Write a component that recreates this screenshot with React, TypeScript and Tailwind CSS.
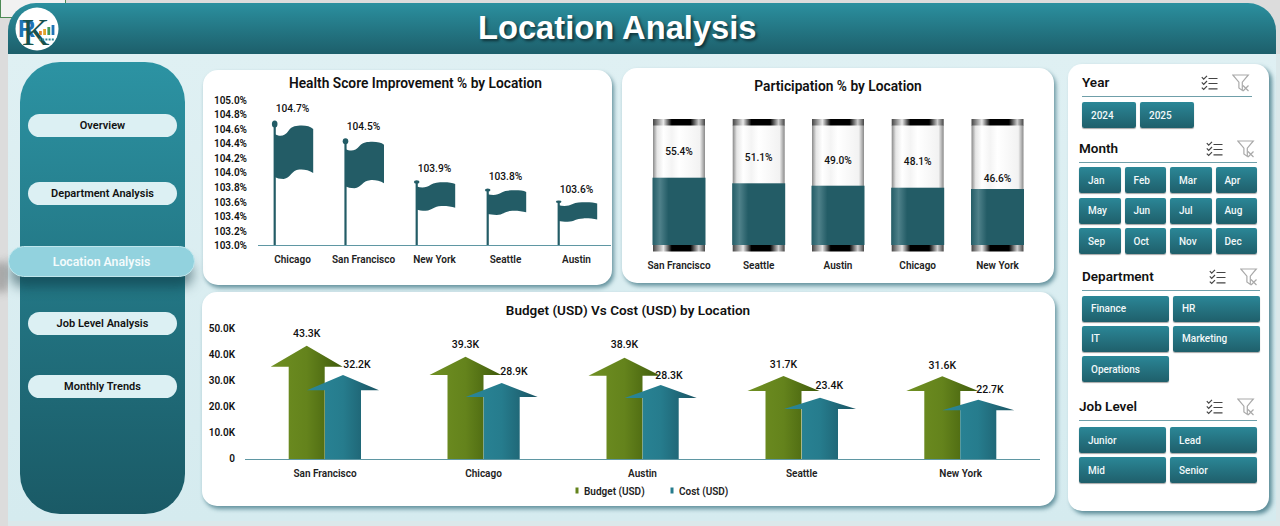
import React from "react";

const DARK = "#235c66";
const AXIS = "#5f97a3";

function ChecklistIcon() {
  return (
    <svg width="17" height="16" viewBox="0 0 17 16" fill="none" stroke="#444" strokeWidth="1.2">
      <path d="M0.8 2.2l1.9 1.9L6 0.8M0.8 7.4l1.9 1.9L6 6M0.8 12.6l1.9 1.9L6 11.2" />
      <path d="M7.5 3.5h9M7.5 8.5h9M7.5 13.8h9" />
    </svg>
  );
}

function FilterIcon() {
  return (
    <svg width="18" height="18" viewBox="0 0 18 18" fill="none" stroke="#a9a9a9" strokeWidth="1.2">
      <path d="M0.8 1h15.5l-6 7.2v8.2l-3.4-2.4V8.2z" />
      <path d="M11 11.5l5.5 5.5M16.5 11.5L11 17" />
    </svg>
  );
}

function NavButton({ label }: { label: string }) {
  return (
    <div className="mx-[8px] flex h-[23px] items-center justify-center rounded-[12px] bg-[#dcf0f3] pt-[1px] text-[11px] font-semibold text-[#111]">
      {label}
    </div>
  );
}

function SlicerButton({ label }: { label: string }) {
  return (
    <div className="flex h-[26px] items-center rounded-[2px] bg-gradient-to-b from-[#2b8797] to-[#1f5f6b] pl-[9px] text-[10px] font-medium text-[#f2f8f9] shadow-[0_1px_1px_rgba(0,0,0,0.35)]">
      {label}
    </div>
  );
}

function SlicerHeader({ title }: { title: string }) {
  return (
    <div className="flex h-[24px] items-center border-b border-[#6f9fa9] pb-[3px]">
      <span className="flex-1 text-[13.5px] leading-none font-semibold text-[#111]">{title}</span>
      <ChecklistIcon />
      <span className="w-[14px]" />
      <FilterIcon />
      <span className="w-[2px]" />
    </div>
  );
}

function flagPath(x: number, c: number, b: number, a: number) {
  const w = 38.5;
  return `M${x} ${c + 0.85 * a} C${x + 5} ${c + 1.15 * a} ${x + 10} ${c + 1.1 * a} ${x + 14} ${c + 0.5 * a} C${x + 17} ${c + 0.05 * a} ${x + 22} ${c} ${x + 27} ${c} C${x + 32} ${c} ${x + 36} ${c + 0.1 * a} ${x + w} ${c + 0.35 * a} L${x + w} ${b - 0.6 * a} C${x + w - 4} ${b - 0.9 * a} ${x + w - 10} ${b - a} ${x + w - 14} ${b - 0.95 * a} C${x + 17} ${b - 0.9 * a} ${x + 16} ${b - 0.1 * a} ${x + 9} ${b} C${x + 5} ${b} ${x + 2} ${b - 0.1 * a} ${x} ${b - 0.2 * a} Z`;
}

const flags = [
  { name: "Chicago", v: "104.7%", x: 274.7, dot: 124, dr: 3.6, c: 125.5, b: 179, a: 10, cx: 292.5, ly: 108 },
  { name: "San Francisco", v: "104.5%", x: 345.5, dot: 141.3, dr: 3, c: 141.7, b: 188.3, a: 8.5, cx: 363.5, ly: 126.5 },
  { name: "New York", v: "103.9%", x: 416.7, dot: 182, dr: 1.8, c: 182.3, b: 210.7, a: 5, cx: 434.5, ly: 168 },
  { name: "Seattle", v: "103.8%", x: 487.7, dot: 190, dr: 1.6, c: 190.3, b: 215, a: 4.5, cx: 505.5, ly: 176 },
  { name: "Austin", v: "103.6%", x: 558.7, dot: 201.7, dr: 1.2, c: 202.3, b: 221.7, a: 3.5, cx: 576.5, ly: 189 },
];

function HealthChart() {
  const ticks = ["105.0%", "104.8%", "104.6%", "104.4%", "104.2%", "104.0%", "103.8%", "103.6%", "103.4%", "103.2%", "103.0%"];
  return (
    <svg width="409" height="215" viewBox="203 70 409 215">
      <text x="415.5" y="87.5" textAnchor="middle" fontSize="13.75" fontWeight="600" fill="#111">Health Score Improvement % by Location</text>
      {ticks.map((t, i) => (
        <text key={t} x="247" y={103.7 + i * 14.55} textAnchor="end" fontSize="10" fontWeight="600" fill="#111">{t}</text>
      ))}
      <line x1="258" x2="611" y1="245.5" y2="245.5" stroke={AXIS} strokeWidth="1" />
      {flags.map((f) => (
        <g key={f.name}>
          <line x1={f.x} x2={f.x} y1={f.dot} y2="245" stroke={DARK} strokeWidth="2.2" />
          <ellipse cx={f.x} cy={f.dot} rx="2.8" ry={f.dr} fill={DARK} />
          <path d={flagPath(f.x, f.c, f.b, f.a)} fill={DARK} />
          <text x={f.cx} y={f.ly + 3.7} textAnchor="middle" fontSize="10.2" fontWeight="500" fill="#111">{f.v}</text>
          <text x={f.cx} y="263" textAnchor="middle" fontSize="10" fontWeight="600" fill="#222">{f.name}</text>
        </g>
      ))}
    </svg>
  );
}

const cols = [
  { name: "San Francisco", v: "55.4%", x: 653, top: 177.7, ly: 151 },
  { name: "Seattle", v: "51.1%", x: 732.7, top: 183.3, ly: 157 },
  { name: "Austin", v: "49.0%", x: 812, top: 185.7, ly: 160.5 },
  { name: "Chicago", v: "48.1%", x: 891.7, top: 187.7, ly: 161 },
  { name: "New York", v: "46.6%", x: 971.5, top: 189, ly: 178 },
];

function ParticipationChart() {
  return (
    <svg width="432" height="215" viewBox="622 68 432 215">
      <defs>
        <linearGradient id="glass" x1="0" x2="1" y1="0" y2="0">
          <stop offset="0" stopColor="#8a8a8a" />
          <stop offset="0.08" stopColor="#e6e6e6" />
          <stop offset="0.2" stopColor="#ffffff" />
          <stop offset="0.36" stopColor="#f4f4f4" />
          <stop offset="0.5" stopColor="#ffffff" />
          <stop offset="0.9" stopColor="#f2f2f2" />
          <stop offset="1" stopColor="#8a8a8a" />
        </linearGradient>
        <linearGradient id="cap" x1="0" x2="1" y1="0" y2="0">
          <stop offset="0" stopColor="#444" />
          <stop offset="0.2" stopColor="#e8e8e8" />
          <stop offset="0.36" stopColor="#000" />
          <stop offset="0.72" stopColor="#000" />
          <stop offset="0.88" stopColor="#cfcfcf" />
          <stop offset="1" stopColor="#444" />
        </linearGradient>
        <linearGradient id="liquid" x1="0" x2="1" y1="0" y2="0">
          <stop offset="0" stopColor="#235c66" />
          <stop offset="0.14" stopColor="#4f818a" />
          <stop offset="0.3" stopColor="#235c66" />
          <stop offset="1" stopColor="#235c66" />
        </linearGradient>
      </defs>
      <text x="838" y="90.5" textAnchor="middle" fontSize="13.75" fontWeight="600" fill="#111">Participation % by Location</text>
      {cols.map((c) => (
        <g key={c.name}>
          <rect x={c.x} y="125" width="52" height="120" fill="url(#glass)" />
          <rect x={c.x} y="119" width="52" height="6.5" fill="url(#cap)" />
          <rect x={c.x - 0.5} y={c.top} width="53" height={245 - c.top} fill="url(#liquid)" />
          <rect x={c.x} y="245" width="52" height="6.5" fill="url(#cap)" />
          <text x={c.x + 26} y={c.ly + 3.7} textAnchor="middle" fontSize="10.2" fontWeight="500" fill="#111">{c.v}</text>
          <text x={c.x + 26} y="269" textAnchor="middle" fontSize="10" fontWeight="600" fill="#222">{c.name}</text>
        </g>
      ))}
    </svg>
  );
}

function arrowPath(cx: number, top: number, base: number) {
  return `M${cx} ${top} L${cx + 36} ${base} L${cx + 18} ${base} L${cx + 18} 459 L${cx - 18} 459 L${cx - 18} ${base} L${cx - 36} ${base} Z`;
}

const groups = [
  { name: "San Francisco", cat: 325, g: 306.7, gt: 345.7, gb: 366.7, b: 343, bt: 375, bb: 390.3, gv: "43.3K", gy: 333.5, bv: "32.2K", bx: 357, by: 364 },
  { name: "Chicago", cat: 483.5, g: 465.5, gt: 356.7, gb: 375, b: 501.7, bt: 383, bb: 397, gv: "39.3K", gy: 344, bv: "28.9K", bx: 514, by: 371 },
  { name: "Austin", cat: 642.5, g: 624.5, gt: 357.7, gb: 375.7, b: 660.7, bt: 385, bb: 398, gv: "38.9K", gy: 344.5, bv: "28.3K", bx: 669, by: 375 },
  { name: "Seattle", cat: 801.7, g: 783.5, gt: 376, gb: 391, b: 820, bt: 397.7, bb: 409, gv: "31.7K", gy: 364, bv: "23.4K", bx: 829.3, by: 385.5 },
  { name: "New York", cat: 960.7, g: 942.3, gt: 376.3, gb: 391, b: 978.3, bt: 399.7, bb: 410.3, gv: "31.6K", gy: 365, bv: "22.7K", bx: 990, by: 389 },
];

function BudgetChart() {
  const ticks: [string, number][] = [["50.0K", 328], ["40.0K", 354.7], ["30.0K", 380.5], ["20.0K", 406.7], ["10.0K", 432.5], ["0", 458.7]];
  return (
    <svg width="853" height="214" viewBox="202 292 853 214">
      <defs>
        <linearGradient id="green" x1="0" x2="1" y1="0" y2="0">
          <stop offset="0" stopColor="#6f8f22" />
          <stop offset="0.5" stopColor="#64831c" />
          <stop offset="1" stopColor="#3f5a0b" />
        </linearGradient>
        <linearGradient id="blue" x1="0" x2="1" y1="0" y2="0">
          <stop offset="0" stopColor="#2a8799" />
          <stop offset="0.5" stopColor="#267c8d" />
          <stop offset="1" stopColor="#1a5463" />
        </linearGradient>
      </defs>
      <text x="628" y="314.5" textAnchor="middle" fontSize="13.5" fontWeight="600" fill="#111">Budget (USD) Vs Cost (USD) by Location</text>
      {ticks.map(([t, y]) => (
        <text key={t} x="235" y={y + 3.5} textAnchor="end" fontSize="10" fontWeight="600" fill="#111">{t}</text>
      ))}
      {groups.map((g) => (
        <g key={g.name}>
          <path d={arrowPath(g.g, g.gt, g.gb)} fill="url(#green)" />
          <path d={arrowPath(g.b, g.bt, g.bb)} fill="url(#blue)" />
          <text x={g.g} y={g.gy + 3.7} textAnchor="middle" fontSize="10.5" fontWeight="500" fill="#111">{g.gv}</text>
          <text x={g.bx} y={g.by + 3.7} textAnchor="middle" fontSize="10.5" fontWeight="500" fill="#111">{g.bv}</text>
          <text x={g.cat} y="477" textAnchor="middle" fontSize="10" fontWeight="600" fill="#222">{g.name}</text>
        </g>
      ))}
      <line x1="245" x2="1040" y1="459.5" y2="459.5" stroke={AXIS} strokeWidth="1" />
      <rect x="575.5" y="487.5" width="3" height="6" fill="#64831c" />
      <text x="584" y="494.5" fontSize="10" fontWeight="600" fill="#222">Budget (USD)</text>
      <rect x="670.5" y="487.5" width="3" height="6" fill="#267c8d" />
      <text x="679" y="494.5" fontSize="10" fontWeight="600" fill="#222">Cost (USD)</text>
    </svg>
  );
}

function Logo() {
  return (
    <svg width="44" height="44" viewBox="0 0 44 44" className="shrink-0">
      <circle cx="22" cy="22" r="21.5" fill="#ffffff" />
      <text x="3" y="30" fontSize="24" fontWeight="700" fill="#1f74b5" fontFamily="'Liberation Sans', sans-serif">R</text>
      <text x="7" y="37.5" fontSize="38" fill="#17524e" fontFamily="'Liberation Serif', serif">K</text>
      <rect x="24" y="24" width="2.8" height="4" fill="#e0832a" />
      <rect x="28.2" y="22" width="2.8" height="6" fill="#e0a52a" />
      <rect x="32.4" y="20" width="2.8" height="8" fill="#3f9a5a" />
      <rect x="36.6" y="18" width="2.8" height="10" fill="#1f74b5" />
      <path d="M24 32.5h16" stroke="#2b8797" strokeWidth="2" strokeDasharray="2 1.2" />
    </svg>
  );
}

export default function App() {
  return (
    <div className="relative h-[526px] w-[1280px] overflow-hidden bg-[#dcdcdc] font-[Roboto,sans-serif]">
      <div className="absolute top-[-1px] left-0 h-[19px] w-[66px] border border-[#4d8a55] bg-[#f1f1f1]" />
      <div className="absolute top-[262px] -left-[6px] h-[30px] w-[14px] bg-[#a8a8a8] blur-[4px]" />

      <div className="relative ml-[8px] w-[1272px] pt-[3px]">
        <header className="flex h-[51px] w-[1268px] items-center rounded-t-[28px] bg-gradient-to-b from-[#2b909f] to-[#1d5f6b] pl-[7px]">
          <Logo />
          <h1 className="ml-[419px] font-['Liberation_Sans',sans-serif] text-[32.7px] leading-none font-bold text-white [text-shadow:2px_2px_3px_rgba(0,0,0,0.55)]">
            Location Analysis
          </h1>
        </header>

        <div className="h-[472px] bg-[#dbe8ea]">
          <main className="flex h-[467px] w-[1268px] bg-gradient-to-b from-[#dff0f3] to-[#d5ebef]">
            <aside className="mt-[8px] ml-[12px] h-[452px] w-[165px] rounded-[40px] bg-gradient-to-b from-[#2c93a3] to-[#1a5a66] pt-[52px]">
              <NavButton label="Overview" />
              <div className="mt-[45px]">
                <NavButton label="Department Analysis" />
              </div>
              <div className="relative mt-[41px] -ml-[12px] flex h-[31px] w-[187px] items-center justify-center rounded-[16px] border border-[#bfe6ec] bg-[#92d2de] pt-[1px] text-[12.3px] font-semibold text-[#f4fbfc] shadow-[0_12px_12px_-2px_rgba(10,50,60,0.5)]">
                Location Analysis
              </div>
              <div className="mt-[35px]">
                <NavButton label="Job Level Analysis" />
              </div>
              <div className="mt-[40px]">
                <NavButton label="Monthly Trends" />
              </div>
            </aside>

            <div className="ml-[17px] flex w-[853px] flex-col">
              <div className="flex h-[238px] items-start">
                <section className="mt-[16px] ml-[1px] h-[215px] w-[409px] rounded-[15px] bg-white shadow-[2px_3px_4px_rgba(40,100,115,0.65)]">
                  <HealthChart />
                </section>
                <section className="mt-[14px] ml-[10px] h-[215px] w-[432px] rounded-[15px] bg-white shadow-[2px_3px_4px_rgba(40,100,115,0.65)]">
                  <ParticipationChart />
                </section>
              </div>
              <section className="h-[214px] w-[853px] rounded-[15px] bg-white shadow-[2px_3px_4px_rgba(40,100,115,0.65)]">
                <BudgetChart />
              </section>
            </div>

            <aside className="mt-[10px] ml-[13px] h-[447px] w-[201px] rounded-[14px] bg-white pt-[9px] shadow-[3px_3px_4px_rgba(40,100,115,0.7)]">
              <div className="ml-[14px] w-[170px]">
                <SlicerHeader title="Year" />
                <div className="mt-[5px] flex gap-[4px]">
                  <div className="w-[54px]"><SlicerButton label="2024" /></div>
                  <div className="w-[54px]"><SlicerButton label="2025" /></div>
                </div>
              </div>
              <div className="mt-[11px] ml-[11px] w-[178px]">
                <SlicerHeader title="Month" />
                <div className="mt-[4px] grid grid-cols-4 gap-x-[4px] gap-y-[4.5px]">
                  {["Jan", "Feb", "Mar", "Apr", "May", "Jun", "Jul", "Aug", "Sep", "Oct", "Nov", "Dec"].map((m) => (
                    <SlicerButton key={m} label={m} />
                  ))}
                </div>
              </div>
              <div className="mt-[13px] ml-[14px] w-[178px]">
                <SlicerHeader title="Department" />
                <div className="mt-[4.5px] grid grid-cols-2 gap-x-[4px] gap-y-[4.25px]">
                  {["Finance", "HR", "IT", "Marketing", "Operations"].map((m) => (
                    <SlicerButton key={m} label={m} />
                  ))}
                </div>
              </div>
              <div className="mt-[15px] ml-[11px] w-[178px]">
                <SlicerHeader title="Job Level" />
                <div className="mt-[6px] grid grid-cols-2 gap-[4px]">
                  {["Junior", "Lead", "Mid", "Senior"].map((m) => (
                    <SlicerButton key={m} label={m} />
                  ))}
                </div>
              </div>
            </aside>
          </main>
        </div>
      </div>
    </div>
  );
}
